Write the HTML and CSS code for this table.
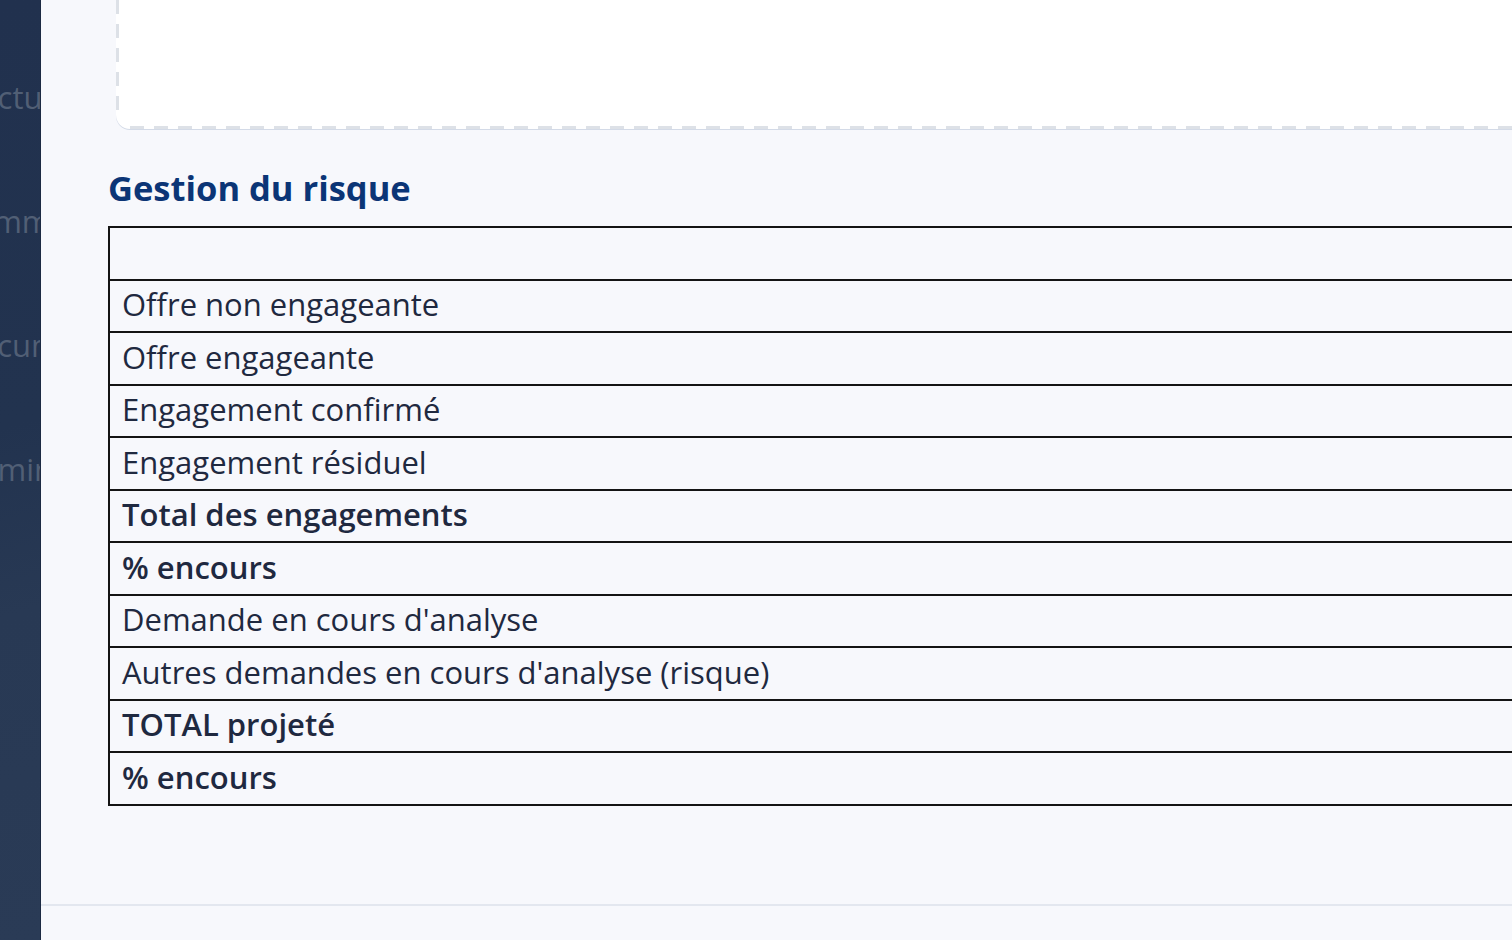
FILE: index.html
```html
<!DOCTYPE html>
<html lang="fr">
<head>
<meta charset="utf-8">
<title>Gestion du risque</title>
<link rel="stylesheet" href="styles.css">
</head>
<body>
<div class="layout">
  <aside class="sidebar">
    <div class="nav-item"><span class="nav-text">Lectures</span></div>
    <div class="nav-item"><span class="nav-text">Commandes</span></div>
    <div class="nav-item"><span class="nav-text">Documents</span></div>
    <div class="nav-item"><span class="nav-text">Administration</span></div>
  </aside>
  <main class="main">
    <div class="drop-card"></div>
    <section class="risk">
      <h2 class="risk-title">Gestion du risque</h2>
      <table class="risk-table">
        <tbody>
          <tr><td class="label"></td><td class="value"></td></tr>
          <tr><td class="label">Offre non engageante</td><td class="value"></td></tr>
          <tr><td class="label">Offre engageante</td><td class="value"></td></tr>
          <tr><td class="label">Engagement confirmé</td><td class="value"></td></tr>
          <tr><td class="label">Engagement résiduel</td><td class="value"></td></tr>
          <tr class="strong"><td class="label">Total des engagements</td><td class="value"></td></tr>
          <tr class="strong"><td class="label">% encours</td><td class="value"></td></tr>
          <tr><td class="label">Demande en cours d'analyse</td><td class="value"></td></tr>
          <tr><td class="label">Autres demandes en cours d'analyse (risque)</td><td class="value"></td></tr>
          <tr class="strong"><td class="label">TOTAL projeté</td><td class="value"></td></tr>
          <tr class="strong"><td class="label">% encours</td><td class="value"></td></tr>
        </tbody>
      </table>
    </section>
    <footer class="footer"></footer>
  </main>
</div>
</body>
</html>
```
FILE: styles.css
```css
* { box-sizing: border-box; }
html, body { margin: 0; padding: 0; height: 100%; }
body {
  background: #f7f8fc;
  font-family: "Open Sans", "Noto Sans", sans-serif;
  overflow: hidden;
}
.layout {
  display: flex;
  height: 940px;
}
.sidebar {
  width: 41px;
  flex: 0 0 41px;
  background: linear-gradient(165deg, #21314e 0%, #22334f 45%, #283954 65%, #2a3b56 100%);
  border-right: 1px solid #1c2a42;
  overflow: hidden;
  padding-top: 73px;
  display: flex;
  flex-direction: column;
}
.nav-item {
  height: 124px;
  white-space: nowrap;
  overflow: hidden;
}
.nav-text {
  display: block;
  font-size: 31px;
  color: #515f75;
  line-height: 48px;
}
.nav-item:nth-child(1) .nav-text { margin-left: -36px; }
.nav-item:nth-child(2) .nav-text { margin-left: -45px; }
.nav-item:nth-child(3) .nav-text { margin-left: -44px; }
.nav-item:nth-child(4) .nav-text { margin-left: -41px; }

.main {
  flex: 1;
  min-width: 0;
  display: flex;
  flex-direction: column;
  overflow: hidden;
}
.drop-card {
  margin-left: 75px;
  width: 1500px;
  height: 129px;
  flex: 0 0 auto;
  background:
    repeating-linear-gradient(90deg, #dde1e7 0 14px, transparent 14px 24px) 14px 100% / 100% 3px no-repeat,
    repeating-linear-gradient(180deg, #dde1e7 0 14px, transparent 14px 24px) 0 0 / 3px calc(100% - 14px) no-repeat,
    #ffffff;
  border-bottom-left-radius: 14px;
  box-shadow: 0 1px 0 #d3dae7;
}
.risk {
  padding-left: 67px;
  padding-top: 39px;
}
.risk-title {
  margin: 0 0 18px 0;
  font-family: "Open Sans", sans-serif;
  font-weight: 700;
  font-size: 34.5px;
  line-height: 40px;
  color: #0b3576;
}
.risk-table {
  border-collapse: collapse;
  width: 1600px;
  table-layout: fixed;
}
.risk-table td {
  border: 2px solid #141414;
  height: 52.5px;
  padding: 0 12px 3px 12px;
  font-size: 31px;
  line-height: 40px;
  color: #1f2940;
  white-space: nowrap;
}
.risk-table td.label { width: 1500px; }
.risk-table tr.strong td { font-weight: 600; }
.footer {
  margin-top: auto;
  height: 36px;
  border-top: 2px solid #e3e7ef;
}
```
